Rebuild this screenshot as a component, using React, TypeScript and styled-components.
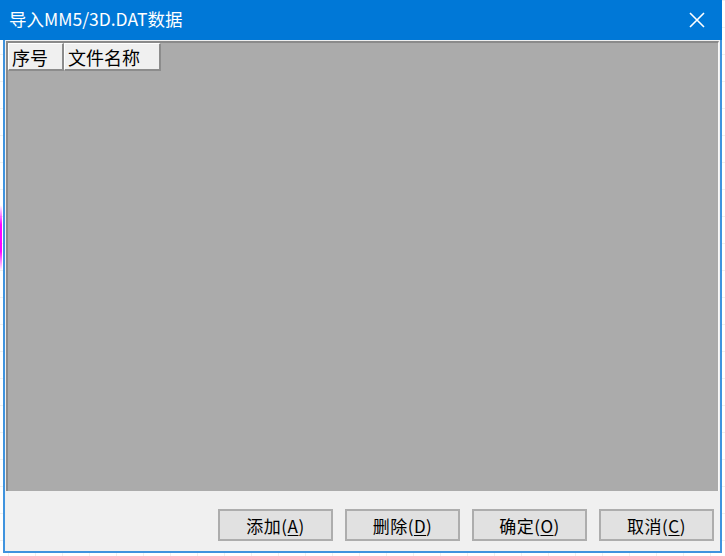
import React from "react";
import styled, { createGlobalStyle } from "styled-components";

const GlobalStyle = createGlobalStyle`
  html, body {
    margin: 0;
    padding: 0;
    background: #ffffff;
  }
  body {
    font-family: "Noto Sans CJK SC", "Microsoft YaHei", sans-serif;
  }
`;

const Desktop = styled.div`
  position: relative;
  width: 725px;
  height: 556px;
  overflow: hidden;
  background-color: #ffffff;
  background-image:
    linear-gradient(to right, #f0f0f0 1px, transparent 1px),
    linear-gradient(to bottom, #f0f0f0 1px, transparent 1px);
  background-size: 27px 27px;
  background-position: 8px 0;
`;

const Stroke = styled.div`
  position: absolute;
  left: -2px;
  top: 205px;
  width: 4px;
  height: 66px;
  border-radius: 3px;
  background: linear-gradient(to bottom, rgba(255, 0, 255, 0), #ff00ff 30%, #ff00ff 70%, rgba(255, 0, 255, 0));
`;

const Window = styled.div`
  display: flex;
  flex-direction: column;
  width: 722px;
  height: 553px;
`;

const TitleBar = styled.div`
  display: flex;
  align-items: center;
  justify-content: space-between;
  height: 40px;
  padding: 0 16px 0 9px;
  background: #0078d7;
  color: #ffffff;
  font-size: 17.5px;
  flex-shrink: 0;
`;

const Title = styled.span`
  line-height: 1;
  padding-bottom: 2px;
`;

const CloseButton = styled.span`
  display: flex;
  width: 18px;
  height: 18px;
`;

const Frame = styled.div`
  display: flex;
  flex-direction: column;
  flex: 1;
  margin-left: 3px;
  border: 2px solid #3f93de;
  border-top: none;
  background: #f0f0f0;
  padding: 1px 1px 0 1px;
`;

const ListArea = styled.div`
  flex: 1;
  background: #ababab;
  border-top: 2px solid #8a8a8a;
  border-left: 2px solid #8a8a8a;
  border-right: 1px solid #f8f8f8;
  display: flex;
  flex-direction: column;
  align-items: flex-start;
`;

const HeaderRow = styled.div`
  display: flex;
  height: 28px;
`;

const HeaderCell = styled.div<{ $width: number }>`
  width: ${(p) => p.$width}px;
  box-sizing: border-box;
  display: flex;
  align-items: center;
  padding-left: 3px;
  background: #f0f0f0;
  border-right: 2px solid #8c8c8c;
  border-bottom: 2px solid #8c8c8c;
  border-left: 1px solid #ffffff;
  border-top: 1px solid #ffffff;
  font-size: 18px;
  color: #000000;
`;

const ButtonBar = styled.div`
  display: flex;
  justify-content: flex-end;
  align-items: flex-start;
  gap: 12px;
  height: 60px;
  box-sizing: border-box;
  padding: 18px 5px 0 0;
  flex-shrink: 0;
`;

const Button = styled.button`
  width: 115px;
  height: 32px;
  box-sizing: border-box;
  background: #e1e1e1;
  border: 2px solid #adadad;
  font-family: "Noto Sans CJK SC", "Microsoft YaHei", sans-serif;
  font-size: 17px;
  letter-spacing: 0.5px;
  color: #000000;
  padding: 0;
  display: flex;
  align-items: center;
  justify-content: center;
  line-height: 1;

  u {
    text-decoration: underline;
    text-underline-offset: 2px;
  }
`;

const buttons = [
  { label: "添加", key: "A" },
  { label: "删除", key: "D" },
  { label: "确定", key: "O" },
  { label: "取消", key: "C" },
];

const App = () => {
  return (
    <Desktop>
      <GlobalStyle />
      <Stroke />
      <Window>
        <TitleBar>
          <Title>导入MM5/3D.DAT数据</Title>
          <CloseButton>
            <svg width="18" height="18" viewBox="0 0 18 18">
              <path d="M2 2 L16 16 M16 2 L2 16" stroke="#ffffff" strokeWidth="1.6" />
            </svg>
          </CloseButton>
        </TitleBar>
        <Frame>
          <ListArea>
            <HeaderRow>
              <HeaderCell $width={56}>序号</HeaderCell>
              <HeaderCell $width={97}>文件名称</HeaderCell>
            </HeaderRow>
          </ListArea>
          <ButtonBar>
            {buttons.map((b) => (
              <Button key={b.key}>
                {b.label}(<u>{b.key}</u>)
              </Button>
            ))}
          </ButtonBar>
        </Frame>
      </Window>
    </Desktop>
  );
};

export default App;
